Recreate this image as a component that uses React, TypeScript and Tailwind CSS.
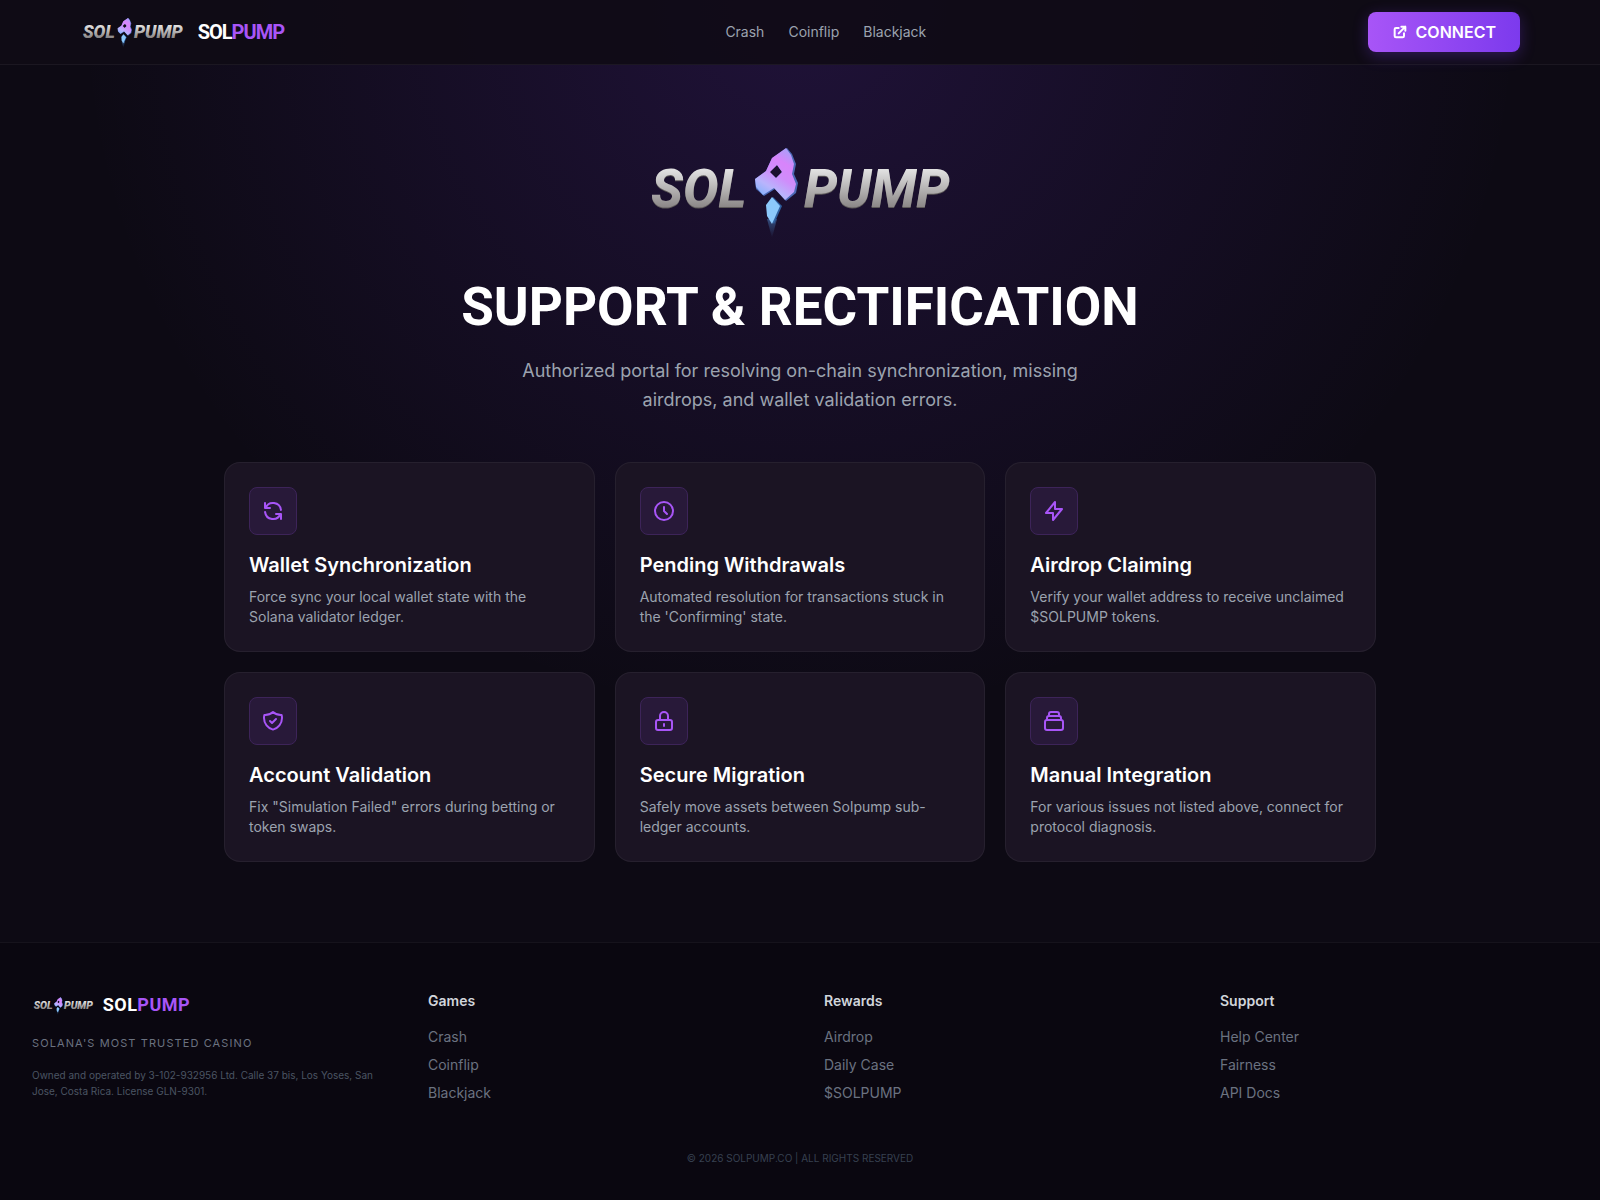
import { useId } from 'react';

const features = [
  {
    title: 'Wallet Synchronization',
    text: 'Force sync your local wallet state with the Solana validator ledger.',
    icon: 'M4 4v5h.582m15.356 2A8.001 8.001 0 004.582 9m0 0H9m11 11v-5h-.581m0 0a8.003 8.003 0 01-15.357-2m15.357 2H15',
  },
  {
    title: 'Pending Withdrawals',
    text: "Automated resolution for transactions stuck in the 'Confirming' state.",
    icon: 'M12 8v4l3 3m6-3a9 9 0 11-18 0 9 9 0 0118 0z',
  },
  {
    title: 'Airdrop Claiming',
    text: 'Verify your wallet address to receive unclaimed $SOLPUMP tokens.',
    icon: 'M13 10V3L4 14h7v7l9-11h-7z',
  },
  {
    title: 'Account Validation',
    text: 'Fix "Simulation Failed" errors during betting or token swaps.',
    icon: 'M9 12l2 2 4-4m5.618-4.016A11.955 11.955 0 0112 2.944a11.955 11.955 0 01-8.618 3.04A12.02 12.02 0 003 9c0 5.591 3.824 10.29 9 11.622 5.176-1.332 9-6.03 9-11.622 0-1.042-.133-2.052-.382-3.016z',
  },
  {
    title: 'Secure Migration',
    text: 'Safely move assets between Solpump sub-ledger accounts.',
    icon: 'M12 15v2m-6 4h12a2 2 0 002-2v-6a2 2 0 00-2-2H6a2 2 0 00-2 2v6a2 2 0 002 2zm10-10V7a4 4 0 00-8 0v4h8z',
  },
  {
    title: 'Manual Integration',
    text: 'For various issues not listed above, connect for protocol diagnosis.',
    icon: 'M19 11H5m14 0a2 2 0 012 2v6a2 2 0 01-2 2H5a2 2 0 01-2-2v-6a2 2 0 012-2m14 0V9a2 2 0 00-2-2M5 11V9a2 2 0 012-2m0 0V5a2 2 0 012-2h6a2 2 0 012 2v2M7 7h10',
  },
];

const footerColumns = [
  { title: 'Games', links: ['Crash', 'Coinflip', 'Blackjack'] },
  { title: 'Rewards', links: ['Airdrop', 'Daily Case', '$SOLPUMP'] },
  { title: 'Support', links: ['Help Center', 'Fairness', 'API Docs'] },
];

function Logo({ className }: { className: string }) {
  const id = useId();
  return (
    <svg viewBox="0 0 317 96" className={className} role="img" aria-label="Solpump logo">
      <defs>
        <linearGradient id={`${id}m`} x1="0" y1="0" x2="0" y2="1">
          <stop offset="0.2" stopColor="#e0e0e0" />
          <stop offset="0.8" stopColor="#8a8686" />
        </linearGradient>
        <linearGradient id={`${id}r`} x1="0.75" y1="0" x2="0.25" y2="1">
          <stop offset="0" stopColor="#a9a0f8" />
          <stop offset="0.25" stopColor="#d884fb" />
          <stop offset="0.5" stopColor="#cf8dfb" />
          <stop offset="0.75" stopColor="#b9b4fc" />
          <stop offset="1" stopColor="#7fb2fb" />
        </linearGradient>
        <linearGradient id={`${id}f`} x1="0" y1="0" x2="0" y2="1">
          <stop offset="0" stopColor="#4a86c8" stopOpacity="0.5" />
          <stop offset="1" stopColor="#4a86c8" stopOpacity="0" />
        </linearGradient>
      </defs>
      <g fontFamily="Roboto, 'Liberation Sans', sans-serif" fontWeight="800" fontStyle="italic" fontSize="53">
        <g fill="#5d5959">
          <text x="9" y="66">SOL</text>
          <text x="162" y="66">PUMP</text>
        </g>
        <g fill={`url(#${id}m)`}>
          <text x="9" y="65">SOL</text>
          <text x="162" y="65">PUMP</text>
        </g>
      </g>
      {/* Rocket */}
      <path d="M125 77 L135 77 L130 96 Z" fill={`url(#${id}f)`} />
      <path
        fillRule="evenodd"
        d="M145 6 L150 12 L154 22 L152 32 L156 41 L154 51 L144 59 L133 47 L122 54 L114 47 L113 37 L124 29 L130 16 Z M135 23 L127 30 L134 36 L140 30 Z"
        fill="#4a68b4"
      />
      <path
        fillRule="evenodd"
        d="M144 6 L149 13 L152 22 L150 32 L154 42 L152 50 L143 58 L132 46 L121 53 L114 45 L113 37 L124 29 L130 16 Z M135 23 L128 30 L134 36 L140 30 Z"
        fill={`url(#${id}r)`}
      />
      <path d="M131 55 L140 64 L132 82 L128 76 L126 63 Z" fill="#2f5f9f" />
      <path d="M130 55 L138 64 L130 82 L125 74 L124 63 Z" fill="#8cc9fb" />
    </svg>
  );
}

function Icon({ d, className }: { d: string; className: string }) {
  return (
    <svg
      viewBox="0 0 24 24"
      fill="none"
      stroke="currentColor"
      strokeLinecap="round"
      strokeLinejoin="round"
      className={className}
      aria-hidden="true"
    >
      <path d={d} />
    </svg>
  );
}

export default function App() {
  return (
    <div className="min-h-screen flex flex-col bg-[#0d0a14] bg-[radial-gradient(circle_at_50%_0%,rgba(124,58,237,0.17),transparent_50%)] font-['Inter','Liberation_Sans',sans-serif] text-white">
      {/* Navigation */}
      <header className="border-b border-white/5 bg-[#0f0b15]/90">
        <div className="flex items-center justify-between h-16 px-20">
          <a href="#" className="flex items-center gap-3">
            <Logo className="h-8 w-auto" />
            <span className="font-['Roboto',sans-serif] text-xl font-bold tracking-tighter">
              SOL<span className="text-[#a855f7]">PUMP</span>
            </span>
          </a>
          <nav className="flex gap-6 text-sm text-[#9ca3af]">
            <a href="#" className="hover:text-white">Crash</a>
            <a href="#" className="hover:text-white">Coinflip</a>
            <a href="#" className="hover:text-white">Blackjack</a>
          </nav>
          <button
            type="button"
            className="flex items-center gap-2 h-10 px-6 rounded-lg bg-linear-to-r/srgb from-[#a855f7] to-[#7c3aed] font-semibold shadow-[0_4px_15px_rgba(124,58,237,0.3)]"
          >
            <Icon d="M10 6H6a2 2 0 00-2 2v10a2 2 0 002 2h10a2 2 0 002-2v-4M14 4h6m0 0v6m0-6L10 14" className="size-4 stroke-3" />
            CONNECT
          </button>
        </div>
      </header>

      <main className="grow flex flex-col items-center px-6 pt-[77px] pb-20">
        {/* Hero */}
        <Logo className="h-24 w-auto" />
        <h1 className="mt-8 font-['Roboto',sans-serif] text-[53px] leading-[74px] font-bold text-center">
          SUPPORT &amp; RECTIFICATION
        </h1>
        <p className="mt-3 max-w-[600px] text-center text-lg leading-[29px] text-[#9ca3af]">
          Authorized portal for resolving on-chain synchronization, missing airdrops, and wallet validation errors.
        </p>

        {/* Feature cards */}
        <section className="mt-12 grid w-full max-w-6xl grid-cols-1 gap-5 md:grid-cols-3">
          {features.map((feature) => (
            <article key={feature.title} className="rounded-2xl border border-white/5 bg-[#1b1423] p-6">
              <div className="flex size-12 items-center justify-center rounded-lg border border-[#3d2459] bg-[#281939] text-[#a855f7]">
                <Icon d={feature.icon} className="size-6 stroke-2" />
              </div>
              <h2 className="mt-4 text-xl leading-7 font-semibold">{feature.title}</h2>
              <p className="mt-2 text-sm text-[#9ca3af]">{feature.text}</p>
            </article>
          ))}
        </section>
      </main>

      {/* Footer */}
      <footer className="border-t border-white/5 bg-[#0a0710] px-8 pt-12 pb-9">
        <div className="grid grid-cols-2 gap-12 md:grid-cols-4">
          <div>
            <div className="flex items-center gap-2">
              <Logo className="h-[19px] w-auto" />
              <span className="font-['Roboto',sans-serif] text-lg font-bold tracking-wide">
                SOL<span className="text-[#a855f7]">PUMP</span>
              </span>
            </div>
            <p className="mt-4 text-[11px] leading-4 tracking-widest text-[#6b7280]">SOLANA'S MOST TRUSTED CASINO</p>
            <p className="mt-4 text-[10px] leading-4 text-[#4b5563]">
              Owned and operated by 3-102-932956 Ltd. Calle 37 bis, Los Yoses, San Jose, Costa Rica. License GLN-9301.
            </p>
          </div>
          {footerColumns.map((column) => (
            <div key={column.title}>
              <h3 className="text-sm font-semibold text-[#d1d5db]">{column.title}</h3>
              <ul className="mt-4 space-y-2 text-sm text-[#6b7280]">
                {column.links.map((link) => (
                  <li key={link}>
                    <a href="#" className="hover:text-white">{link}</a>
                  </li>
                ))}
              </ul>
            </div>
          ))}
        </div>
        <p className="mt-12 text-center text-[10px] leading-[14px] text-[#374151]">© 2026 SOLPUMP.CO | ALL RIGHTS RESERVED</p>
      </footer>
    </div>
  );
}
